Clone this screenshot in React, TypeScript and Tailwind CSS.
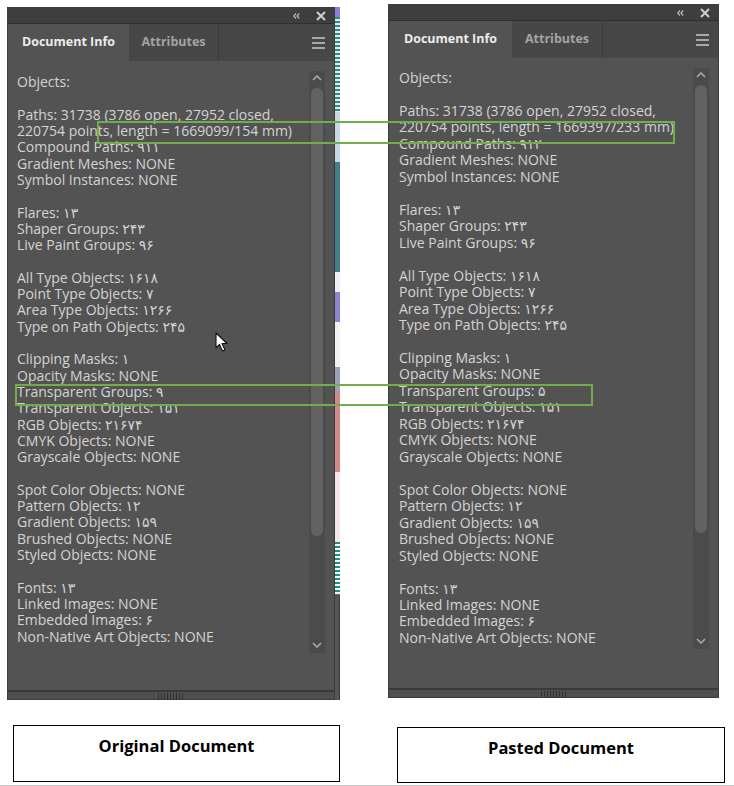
import React from 'react';

const leftLines = [
  'Objects:',
  '',
  'Paths: 31738 (3786 open, 27952 closed,',
  '220754 points, length = 1669099/154 mm)',
  'Compound Paths: ۹۱۱',
  'Gradient Meshes: NONE',
  'Symbol Instances: NONE',
  '',
  'Flares: ۱۳',
  'Shaper Groups: ۲۴۳',
  'Live Paint Groups: ۹۶',
  '',
  'All Type Objects: ۱۶۱۸',
  'Point Type Objects: ۷',
  'Area Type Objects: ۱۲۶۶',
  'Type on Path Objects: ۲۴۵',
  '',
  'Clipping Masks: ۱',
  'Opacity Masks: NONE',
  'Transparent Groups: ۹',
  'Transparent Objects: ۱۵۱',
  'RGB Objects: ۲۱۶۷۴',
  'CMYK Objects: NONE',
  'Grayscale Objects: NONE',
  '',
  'Spot Color Objects: NONE',
  'Pattern Objects: ۱۲',
  'Gradient Objects: ۱۵۹',
  'Brushed Objects: NONE',
  'Styled Objects: NONE',
  '',
  'Fonts: ۱۳',
  'Linked Images: NONE',
  'Embedded Images: ۶',
  'Non-Native Art Objects: NONE',
];

const rightLines = leftLines.map((l) => {
  if (l.startsWith('220754')) return '220754 points, length = 1669397/233 mm)';
  if (l.startsWith('Compound')) return 'Compound Paths: ۹۱۲';
  if (l.startsWith('Transparent Groups')) return 'Transparent Groups: ۵';
  return l;
});

const textFont = { fontFamily: '"Open Sans", "DejaVu Sans", sans-serif' };

function Chevron({ up }: { up?: boolean }) {
  return (
    <svg width="10" height="6" viewBox="0 0 10 6" className="block">
      <path
        d={up ? 'M1 5 L5 1 L9 5' : 'M1 1 L5 5 L9 1'}
        fill="none"
        stroke="#a9a9a9"
        strokeWidth="1.6"
      />
    </svg>
  );
}

function Panel({
  lines,
  activeW,
  otherW,
  textPad,
  leading,
  topPad,
  trackMt,
  trackMb,
}: {
  lines: string[];
  activeW: string;
  otherW: string;
  textPad: string;
  leading: string;
  topPad: string;
  trackMt: string;
  trackMb: string;
}) {
  return (
    <div className="flex h-full w-full flex-col border border-[#3b3b3b] bg-[#535353]" style={textFont}>
      {/* title strip */}
      <div className="flex h-[15px] shrink-0 items-center justify-end gap-[16px] bg-[#3e3e3e] pr-[8px]">
        <svg width="7" height="6" viewBox="0 0 7 6">
          <path d="M3 0.5 L0.8 3 L3 5.5 M6.2 0.5 L4 3 L6.2 5.5" fill="none" stroke="#b8b8b8" strokeWidth="1.2" />
        </svg>
        <svg width="10" height="10" viewBox="0 0 10 10">
          <path d="M1 1 L9 9 M9 1 L1 9" stroke="#cfcfcf" strokeWidth="2" />
        </svg>
      </div>
      {/* tabs */}
      <div className="flex h-[38px] shrink-0 border-t border-[#2f2f2f] bg-[#474747]">
        <div className={`flex items-center justify-center bg-[#535353] text-[12.5px] font-bold text-[#ececec] ${activeW}`}>
          Document Info
        </div>
        <div className={`flex items-center justify-center border-r border-[#3a3a3a] text-[12.5px] font-bold text-[#a4a4a4] ${otherW}`}>
          Attributes
        </div>
        <div className="flex flex-1 items-center justify-end pr-[9px]">
          <div className="flex w-[13px] flex-col gap-[3px]">
            <span className="h-[2px] bg-[#a8a8a8]" />
            <span className="h-[2px] bg-[#a8a8a8]" />
            <span className="h-[2px] bg-[#a8a8a8]" />
          </div>
        </div>
      </div>
      {/* content */}
      <div className="flex min-h-0 flex-1">
        <div className={`flex-1 text-[14px] text-[#d3d3d3] ${textPad} ${topPad} ${leading}`}>
          {lines.map((l, i) => (
            <div key={i} className="whitespace-nowrap">
              {l || '\u00a0'}
            </div>
          ))}
        </div>
        <div className={`mr-[9px] flex w-[16px] flex-col items-center bg-[#4b4b4b] ${trackMt} ${trackMb}`}>
          <div className="flex h-[14px] items-center">
            <Chevron up />
          </div>
          <div className="mt-[3px] h-[448px] w-[12px] rounded-full bg-[#626262]" />
          <div className="flex-1" />
          <div className="flex h-[16px] items-center">
            <Chevron />
          </div>
        </div>
      </div>
      {/* resize grip */}
      <div className="flex h-[9px] shrink-0 justify-center border-t-2 border-[#393939] bg-[#4f4f4f]">
        <div className="mt-[1px] h-[7px] w-[26px] bg-[repeating-linear-gradient(90deg,#333_0_1px,transparent_1px_3px)]" />
      </div>
    </div>
  );
}

export default function App() {
  return (
    <div className="relative h-[786px] w-[734px] overflow-hidden border-b border-[#c9c9c9] bg-white">
      <div className="flex h-[700px] items-start">
        <div className="ml-[7px] mt-[7px] flex h-[693px]">
          <div className="h-full w-[328px]">
            <Panel
              lines={leftLines}
              activeW="w-[121px]"
              otherW="w-[90px]"
              textPad="pl-[9px]"
              leading="leading-[16.32px]"
              topPad="pt-[13px]"
              trackMt="mt-[10px]"
              trackMb="mb-[37px]"
            />
          </div>
          {/* artwork peeking out behind the panel */}
          <div className="flex h-full w-[5px] flex-col">
            <div className="h-[10px] bg-[#8a80d8]" />
            <div className="h-[95px] bg-[repeating-linear-gradient(180deg,#2f8b86_0_2px,#dfe9ec_2px_4px)]" />
            <div className="h-[50px] bg-[#c7d7e6]" />
            <div className="h-[110px] bg-[repeating-linear-gradient(180deg,#2f8b86_0_2px,#5b6f8f_2px_4px)]" />
            <div className="h-[20px] bg-[#eeeef6]" />
            <div className="h-[30px] bg-[#8c86cf]" />
            <div className="h-[45px] bg-[#f3f3f6]" />
            <div className="h-[25px] bg-[#9aa0b8]" />
            <div className="h-[80px] bg-[#d08a8a]" />
            <div className="h-[70px] bg-[#f4e7e7]" />
            <div className="h-[53px] bg-[repeating-linear-gradient(180deg,#1f8c88_0_2px,#f3f3f3_2px_4px)]" />
            <div className="h-[2px] bg-[#6d3a64]" />
            <div className="flex-1 border-r border-[#3b3b3b] bg-[#565656]" />
          </div>
        </div>
        <div className="ml-[48px] mt-[4px] h-[694px] w-[331px]">
          <Panel
            lines={rightLines}
            activeW="w-[123px]"
            otherW="w-[91px]"
            textPad="pl-[10px]"
            leading="leading-[16.47px]"
            topPad="pt-[12px]"
            trackMt="mt-[10px]"
            trackMb="mb-[39px]"
          />
        </div>
      </div>

      {/* captions */}
      <div className="flex items-start" style={{ fontFamily: '"Open Sans", sans-serif' }}>
        <div className="ml-[13px] mt-[25px] flex h-[57px] w-[327px] justify-center border border-black pt-[8px] text-[16.5px] font-bold text-black">
          Original Document
        </div>
        <div className="ml-[57px] mt-[27px] flex h-[56px] w-[328px] justify-center border border-black pt-[8px] text-[16.5px] font-bold text-black">
          Pasted Document
        </div>
      </div>

      {/* annotation boxes drawn over both panels */}
      <div className="absolute left-[97px] top-[121px] h-[23px] w-[578px] border-2 border-[#72ad4c]" />
      <div className="absolute left-[15px] top-[384px] h-[22px] w-[578px] border-2 border-[#72ad4c]" />

      {/* mouse pointer */}
      <svg className="absolute left-[215px] top-[332px]" width="14" height="21" viewBox="0 0 14 21">
        <path d="M1 1 L1 16 L4.5 12.5 L7.5 19 L10 18 L7 11.5 L12 11.5 Z" fill="#ffffff" stroke="#111" strokeWidth="1.1" strokeLinejoin="round" />
      </svg>
    </div>
  );
}
